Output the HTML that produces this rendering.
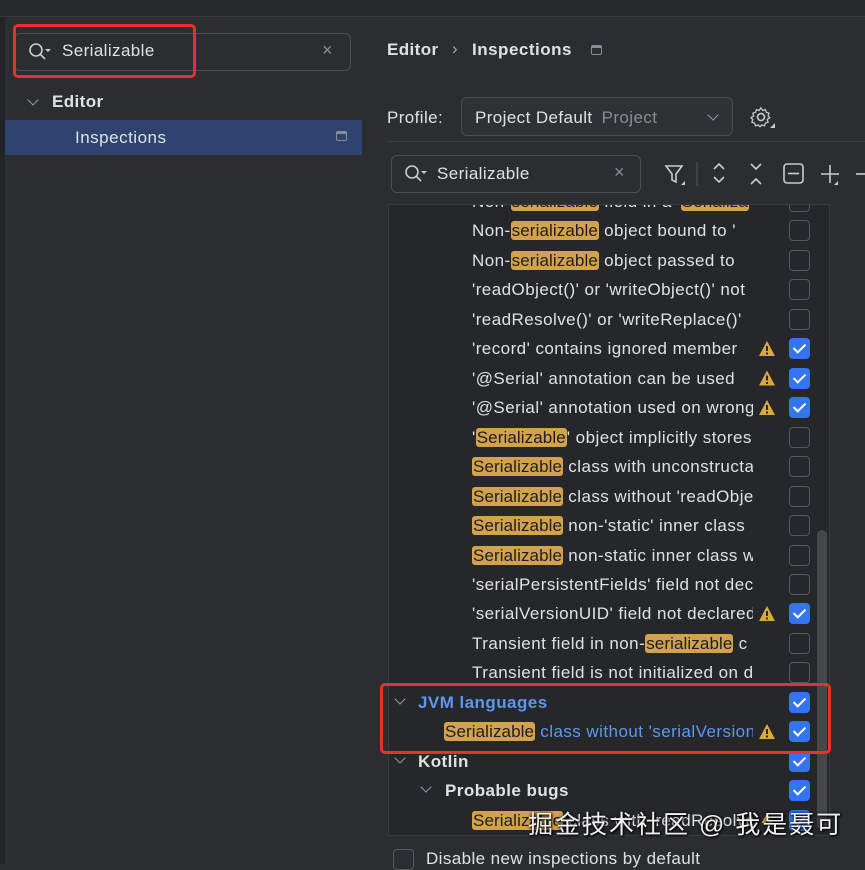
<!DOCTYPE html>
<html><head><meta charset="utf-8"><style>
*{margin:0;padding:0;box-sizing:border-box}
body{width:865px;height:864px;overflow:hidden;background:#2b2d30;font-family:"Liberation Sans","Noto Sans CJK SC",sans-serif;color:#dfe1e5;position:relative;font-size:17px}
.a{position:absolute}
.hl{background:#d2a24c;color:#1e1f22;border-radius:3px;padding:0 1px;letter-spacing:0.1px}
.row{position:absolute;left:472px;width:281px;height:28px;line-height:28px;white-space:nowrap;overflow:hidden;letter-spacing:0.45px}
.cb{position:absolute;left:789px;width:21px;height:21px;border:1.5px solid #55585e;border-radius:4px}
.cb.on{background:#3574f0;border-color:#3574f0}
.cb.on::after{content:"";position:absolute;left:6px;top:2px;width:5px;height:10px;border:solid #fff;border-width:0 2.5px 2.5px 0;transform:rotate(45deg)}
.chev{position:absolute;width:8px;height:8px;border:solid #9a9da3;border-width:0 1.5px 1.5px 0;transform:rotate(45deg)}
</style></head><body>
<div class="a" style="left:0;top:0;width:865px;height:17px;background:#27282b;border-bottom:1px solid #36383c"></div>
<div class="a" style="left:0;top:17px;width:5px;height:847px;background:#232427"></div>
<div class="a" style="left:14px;top:33px;width:337px;height:38px;border:1px solid #4a4d52;border-radius:6px"></div>
<svg class="a" style="left:27px;top:41px" width="26" height="22"><circle cx="9" cy="9" r="6" fill="none" stroke="#ccc" stroke-width="1.6"/><line x1="13" y1="13" x2="18" y2="18" stroke="#ccc" stroke-width="1.6"/><path d="M18 8h6l-3 3z" fill="#ccc"/></svg>
<div class="a" style="left:62px;top:41px;font-size:17px;letter-spacing:0.4px">Serializable</div>
<div class="a" style="left:322px;top:40px;color:#8a8d92;font-size:18px">×</div>
<div class="a" style="left:13px;top:24px;width:183px;height:54px;border:3px solid #e8302c;border-radius:5px"></div>
<div class="chev" style="left:29px;top:96px"></div>
<div class="a" style="left:52px;top:92px;font-weight:bold;letter-spacing:0.4px">Editor</div>
<div class="a" style="left:5px;top:120px;width:357px;height:35px;background:#2e436e"></div>
<div class="a" style="left:75px;top:128px;letter-spacing:0.5px">Inspections</div>
<div class="a" style="left:336px;top:131px;width:11px;height:10px;border:1.3px solid #8a8d92;border-radius:2px;border-top-width:3px"></div>
<div class="a" style="left:387px;top:40px;font-weight:bold;letter-spacing:0.4px">Editor</div>
<div class="a" style="left:452px;top:39px;color:#aaa">›</div>
<div class="a" style="left:472px;top:40px;font-weight:bold;letter-spacing:0.5px">Inspections</div>
<div class="a" style="left:591px;top:45px;width:11px;height:10px;border:1.3px solid #8a8d92;border-radius:2px;border-top-width:3px"></div>
<div class="a" style="left:387px;top:108px;letter-spacing:0.4px">Profile:</div>
<div class="a" style="left:461px;top:97px;width:272px;height:39px;background:#2f3134;border:1px solid #4a4d52;border-radius:6px"></div>
<div class="a" style="left:475px;top:108px;letter-spacing:0.4px">Project Default <span style="color:#8a8d92;margin-left:4px">Project</span></div>
<div class="chev" style="left:709px;top:111px"></div>
<svg class="a" style="left:750px;top:106px" width="26" height="26"><circle cx="11" cy="11" r="3.5" fill="none" stroke="#ccc" stroke-width="1.6"/><path d="M11 2l2 3 3-1 1 3 3 1-1 3 2 2-3 2 1 3-3 1-1 3-3-1-2 2-2-2-3 1-1-3-3-1 1-3-2-2 3-2-1-3 3-1 1-3 3 1z" fill="none" stroke="#ccc" stroke-width="1.4" transform="translate(1,0) scale(.9)"/><path d="M20 22h5v-5z" fill="#ccc"/></svg>
<div class="a" style="left:387px;top:141px;width:478px;height:1px;background:#3a3c40"></div>
<div class="a" style="left:391px;top:155px;width:250px;height:38px;border:1px solid #4a4d52;border-radius:6px"></div>
<svg class="a" style="left:403px;top:163px" width="26" height="22"><circle cx="9" cy="9" r="6" fill="none" stroke="#ccc" stroke-width="1.6"/><line x1="13" y1="13" x2="18" y2="18" stroke="#ccc" stroke-width="1.6"/><path d="M18 8h6l-3 3z" fill="#ccc"/></svg>
<div class="a" style="left:437px;top:164px;letter-spacing:0.4px">Serializable</div>
<div class="a" style="left:614px;top:162px;color:#8a8d92;font-size:18px">×</div>
<svg class="a" style="left:660px;top:160px" width="205" height="30" fill="none" stroke="#ccc" stroke-width="1.6"><path d="M6 6h16l-6 8v8l-4-2v-6z"/><path d="M21 25h4v-4z" fill="#ccc" stroke="none"/><line x1="37" y1="2" x2="37" y2="26" stroke="#45474b"/><path d="M54 9l5-5 5 5M54 17l5 5 5-5"/><path d="M91 4l5 5 5-5M91 24l5-5 5 5"/><rect x="124" y="4" width="19" height="19" rx="3"/><line x1="128" y1="13.5" x2="139" y2="13.5"/><path d="M161 14h18M170 5v18"/><path d="M174 25h4v-4z" fill="#ccc" stroke="none"/><path d="M196 14h9"/></svg>
<div class="a" style="left:388px;top:204px;width:442px;height:632px;background:#26272a;border:1px solid #393b3f;overflow:hidden"></div>
<div class="a" style="left:817px;top:530px;width:10px;height:300px;background:#45474b;border-radius:5px"></div>
<div style="position:absolute;left:0;top:0;width:865px;height:836px;clip-path:inset(205px 0 0 0)">
<div class="row" style="top:188px">Non-<span class="hl">serializable</span> field in a '<span class="hl">Serializa</span></div><div class="cb" style="top:191px"></div>
<div class="row" style="top:217px">Non-<span class="hl">serializable</span> object bound to '</div><div class="cb" style="top:220px"></div>
<div class="row" style="top:247px">Non-<span class="hl">serializable</span> object passed to</div><div class="cb" style="top:250px"></div>
<div class="row" style="top:276px">'readObject()' or 'writeObject()' not</div><div class="cb" style="top:279px"></div>
<div class="row" style="top:306px">'readResolve()' or 'writeReplace()'</div><div class="cb" style="top:309px"></div>
<div class="row" style="top:335px">'record' contains ignored member</div><div class="cb on" style="top:338px"></div>
<div class="row" style="top:365px">'@Serial' annotation can be used</div><div class="cb on" style="top:368px"></div>
<div class="row" style="top:394px">'@Serial' annotation used on wrong</div><div class="cb on" style="top:397px"></div>
<div class="row" style="top:424px">'<span class="hl">Serializable</span>' object implicitly stores</div><div class="cb" style="top:427px"></div>
<div class="row" style="top:453px"><span class="hl">Serializable</span> class with unconstructable</div><div class="cb" style="top:456px"></div>
<div class="row" style="top:483px"><span class="hl">Serializable</span> class without 'readObject</div><div class="cb" style="top:486px"></div>
<div class="row" style="top:512px"><span class="hl">Serializable</span> non-'static' inner class</div><div class="cb" style="top:515px"></div>
<div class="row" style="top:542px"><span class="hl">Serializable</span> non-static inner class w</div><div class="cb" style="top:545px"></div>
<div class="row" style="top:571px">'serialPersistentFields' field not dec</div><div class="cb" style="top:574px"></div>
<div class="row" style="top:600px">'serialVersionUID' field not declared</div><div class="cb on" style="top:603px"></div>
<div class="row" style="top:630px">Transient field in non-<span class="hl">serializable</span> c</div><div class="cb" style="top:633px"></div>
<div class="row" style="top:659px">Transient field is not initialized on d</div><div class="cb" style="top:662px"></div>
<div class="chev" style="left:396px;top:695px"></div>
<div class="row" style="left:418px;top:689px;color:#5e97f0;font-weight:bold">JVM languages</div><div class="cb on" style="top:692px"></div>
<div class="row" style="left:444px;top:718px;width:309px;color:#5e97f0"><span class="hl">Serializable</span> class without 'serialVersionUID'</div><div class="cb on" style="top:721px"></div>
<div class="chev" style="left:396px;top:754px"></div>
<div class="row" style="left:418px;top:748px;font-weight:bold">Kotlin</div><div class="cb on" style="top:751px"></div>
<div class="chev" style="left:422px;top:783px"></div>
<div class="row" style="left:445px;top:777px;font-weight:bold">Probable bugs</div><div class="cb on" style="top:780px"></div>
<div class="row" style="top:807px"><span class="hl">Serializable</span> class with 'readResolve'</div><div class="cb on" style="top:810px"></div>
</div>
<svg class="a" style="left:758px;top:340px" width="18" height="300" fill="#d8a93e">
<g><path d="M9 1L17 16H1z"/><rect x="8" y="6" width="2" height="5" fill="#26272a"/><rect x="8" y="12.5" width="2" height="2" fill="#26272a"/></g>
<g transform="translate(0,29.5)"><path d="M9 1L17 16H1z"/><rect x="8" y="6" width="2" height="5" fill="#26272a"/><rect x="8" y="12.5" width="2" height="2" fill="#26272a"/></g>
<g transform="translate(0,59)"><path d="M9 1L17 16H1z"/><rect x="8" y="6" width="2" height="5" fill="#26272a"/><rect x="8" y="12.5" width="2" height="2" fill="#26272a"/></g>
<g transform="translate(0,265)"><path d="M9 1L17 16H1z"/><rect x="8" y="6" width="2" height="5" fill="#26272a"/><rect x="8" y="12.5" width="2" height="2" fill="#26272a"/></g>
</svg>
<svg class="a" style="left:758px;top:723px" width="18" height="100" fill="#d8a93e">
<g><path d="M9 1L17 16H1z"/><rect x="8" y="6" width="2" height="5" fill="#26272a"/><rect x="8" y="12.5" width="2" height="2" fill="#26272a"/></g>
<g transform="translate(0,89)"><path d="M9 1L17 16H1z"/><rect x="8" y="6" width="2" height="5" fill="#26272a"/><rect x="8" y="12.5" width="2" height="2" fill="#26272a"/></g>
</svg>
<div class="a" style="left:380px;top:683px;width:451px;height:71px;border:3px solid #e8302c;border-radius:5px"></div>
<div class="a" style="left:528px;top:805px;font-size:25px;color:#f0f0f0;text-shadow:0 0 3px #000,1px 1px 2px #000;letter-spacing:2px">掘金技术社区 @ 我是聂可</div>
<div class="a" style="left:393px;top:849px;width:21px;height:21px;border:1.5px solid #55585e;border-radius:4px"></div>
<div class="a" style="left:426px;top:849px;letter-spacing:0.4px">Disable new inspections by default</div>
</body></html>
